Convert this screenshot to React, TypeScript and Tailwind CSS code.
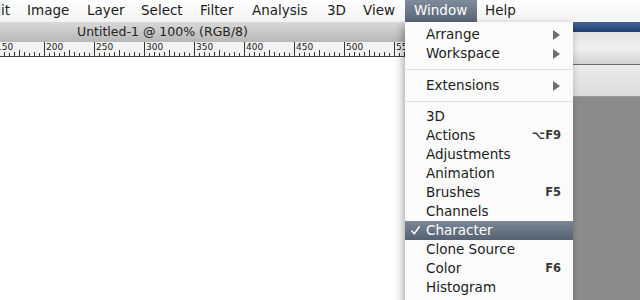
import React from "react";

const menuBar = [
  { label: "Edit", w: 43 },
  { label: "Image", w: 60 },
  { label: "Layer", w: 54 },
  { label: "Select", w: 59 },
  { label: "Filter", w: 52 },
  { label: "Analysis", w: 75 },
  { label: "3D", w: 36 },
  { label: "View", w: 42 },
];

function Ruler() {
  const ticks: React.ReactNode[] = [];
  for (let x = -6; x <= 560; x += 5) {
    const v = x + 156; // 44 -> 200
    let h = 3;
    if (v % 50 === 0) h = 15;
    else if (v % 25 === 0) h = 6;
    else if (v % 10 === 0) h = 4;
    else h = 3;
    ticks.push(<rect key={x} x={x} y={14 - h} width={1} height={h} fill="#333" />);
  }
  const labels: React.ReactNode[] = [];
  for (let x = -6; x <= 400; x += 50) {
    const v = x + 156;
    labels.push(
      <text key={"l" + x} x={x + 2} y={8} fontSize={9} fill="#1a1a1a" fontFamily="DejaVu Sans, sans-serif">
        {v}
      </text>
    );
  }
  return (
    <svg width={560} height={15} className="block">
      <rect x={0} y={0} width={560} height={15} fill="#f3f3f3" />
      {ticks}
      {labels}
      <rect x={0} y={14} width={560} height={1} fill="#444" />
    </svg>
  );
}

function Arrow() {
  return (
    <svg width={7} height={10} viewBox="0 0 7 10" className="block">
      <polygon points="0,0 7,5 0,10" fill="#6e6e6e" />
    </svg>
  );
}

function Check() {
  return (
    <svg width={9} height={9} viewBox="0 0 9 9" className="absolute left-[6px] top-[5px]">
      <path d="M0.8 5 L3.3 7.8 L8.3 0.8" fill="none" stroke="#fff" strokeWidth={1.5} strokeLinecap="round" strokeLinejoin="round" />
    </svg>
  );
}

type Item = { label: string; shortcut?: string; arrow?: boolean; checked?: boolean; sep?: "a" | "b" };

const items: Item[] = [
  { label: "Arrange", arrow: true },
  { label: "Workspace", arrow: true },
  { label: "", sep: "a" },
  { label: "Extensions", arrow: true },
  { label: "", sep: "b" },
  { label: "3D" },
  { label: "Actions", shortcut: "⌥F9" },
  { label: "Adjustments" },
  { label: "Animation" },
  { label: "Brushes", shortcut: "F5" },
  { label: "Channels" },
  { label: "Character", checked: true },
  { label: "Clone Source" },
  { label: "Color", shortcut: "F6" },
  { label: "Histogram" },
];

export default function App() {
  return (
    <div className="relative w-[640px] h-[300px] overflow-hidden bg-white font-['DejaVu_Sans',sans-serif] text-[#1c1c1c]">
      {/* menu bar */}
      <div className="flex h-[22px] items-center bg-linear-to-b from-[#ffffff] to-[#f4f4f4] text-[13.5px] leading-none">
        <div className="flex h-full items-center ml-[-16px]">
          {menuBar.map((m) => (
            <span key={m.label} className="shrink-0" style={{ width: m.w }}>
              {m.label}
            </span>
          ))}
          <span className="flex h-full w-[72px] shrink-0 items-center pl-[9px] text-white bg-linear-to-b from-[#7f8a9a] to-[#5a6576]">
            Window
          </span>
          <span className="pl-[8px]">Help</span>
        </div>
      </div>

      <div className="flex h-[278px]">
        {/* document window */}
        <div className="flex w-[560px] shrink-0 flex-col">
          <div className="flex h-[20px] items-center pl-[77px] text-[12.5px] leading-none text-[#222] bg-linear-to-b from-[#d9d9d9] to-[#b7b7b7]">
            Untitled-1 @ 100% (RGB/8)
          </div>
          <Ruler />
          <div className="flex-1 bg-white" />
        </div>
        {/* right panels */}
        <div className="flex flex-1 flex-col">
          <div className="h-[10px] bg-linear-to-b from-[#45659a] to-[#1f3d70]" />
          <div className="h-[32px] bg-linear-to-b from-[#e2e2e2] via-[#f1f1f1] to-[#d3d3d3]" />
          <div className="h-px bg-[#6a6a6a]" />
          <div className="h-[31px] bg-linear-to-b from-[#ececec] to-[#dcdcdc]" />
          <div className="h-px bg-[#9a9a9a]" />
          <div className="flex-1 bg-[#8c8c8c]" />
        </div>
      </div>

      {/* dropdown menu */}
      <div className="absolute left-[405px] top-[22px] w-[168px] h-[290px] bg-[#fbfbfb] pt-[3px] shadow-[-2px_3px_8px_rgba(0,0,0,0.35)] text-[13.5px] leading-none">
        {items.map((it, i) => {
          if (it.sep === "a")
            return (
              <div key={i} className="h-[13px] pt-[6px]">
                <div className="h-px bg-[#e2e2e2]" />
              </div>
            );
          if (it.sep === "b")
            return (
              <div key={i} className="h-[12px] pt-[6px]">
                <div className="h-px bg-[#e2e2e2]" />
              </div>
            );
          return (
            <div
              key={i}
              className={
                "relative flex h-[19px] items-center pl-[21px] " +
                (it.checked ? "bg-linear-to-b from-[#7b8697] to-[#566172] text-white" : "")
              }
            >
              {it.checked && <Check />}
              <span className="flex-1">{it.label}</span>
              {it.shortcut && (
                <span className="pr-[12px] text-[11.5px] font-bold text-[#3a3a3a]">{it.shortcut}</span>
              )}
              {it.arrow && (
                <span className="pr-[13px]">
                  <Arrow />
                </span>
              )}
            </div>
          );
        })}
      </div>
    </div>
  );
}
